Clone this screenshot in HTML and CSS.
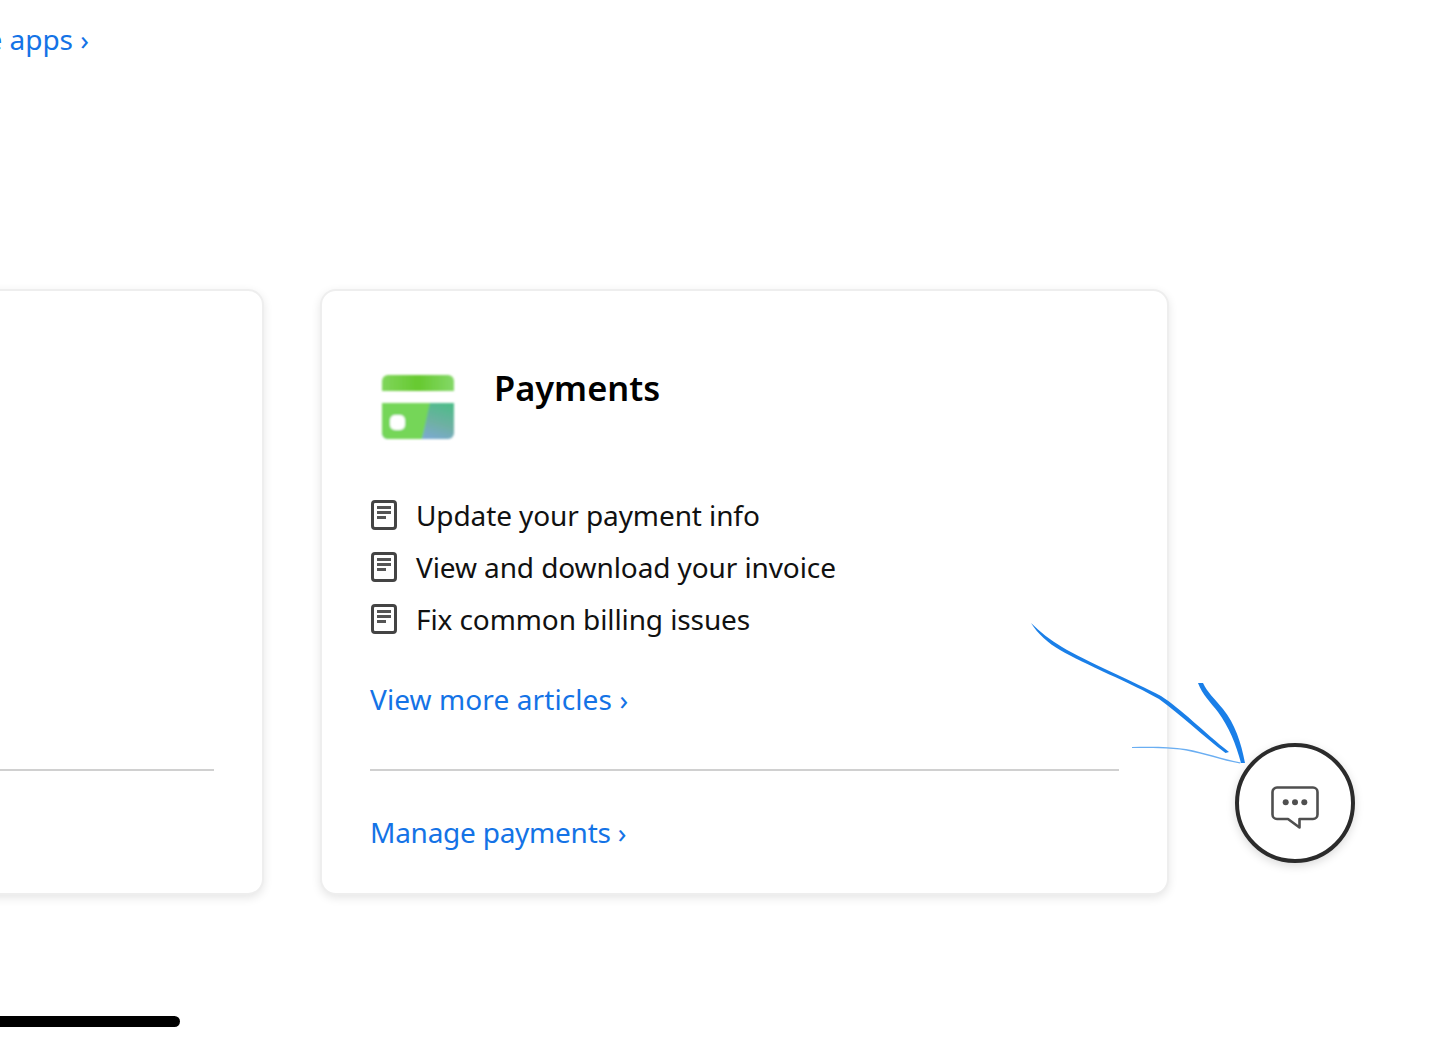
FILE: index.html
```html
<!DOCTYPE html>
<html lang="en">
<head>
    <meta charset="UTF-8">
    <meta name="viewport" content="width=device-width, initial-scale=1.0">
    <title>Account help</title>
    <link rel="stylesheet" href="styles.css">
</head>
<body>
    <div class="page">
        <div class="top-row">
            <a class="link" href="#">Manage apps <span class="chevron">›</span></a>
        </div>

        <div class="cards">
            <div class="card">
                <div class="card-body"></div>
                <hr class="divider">
                <div class="card-footer"></div>
            </div>

            <div class="card">
                <div class="card-body">
                    <div class="card-head">
                        <div class="card-icon">
                            <svg width="96" height="96" viewBox="0 0 96 96">
                                <defs>
                                    <linearGradient id="bandGrad" x1="0" y1="0" x2="1" y2="0">
                                        <stop offset="0" stop-color="#80d65c"/>
                                        <stop offset="0.5" stop-color="#66c92f"/>
                                        <stop offset="1" stop-color="#84d868"/>
                                    </linearGradient>
                                    <linearGradient id="cardGrad" x1="0.45" y1="1" x2="1" y2="0.1">
                                        <stop offset="0" stop-color="#7ea8dc"/>
                                        <stop offset="0.5" stop-color="#6fb0a4"/>
                                        <stop offset="1" stop-color="#4fbb8a"/>
                                    </linearGradient>
                                    <filter id="soft"><feGaussianBlur stdDeviation="0.8"/></filter>
                                    <clipPath id="cardClip"><path d="M12 44h72v30a6 6 0 0 1-6 6H18a6 6 0 0 1-6-6z"/></clipPath>
                                </defs>
                                <g filter="url(#soft)">
                                    <path d="M12 32h72v-10a6 6 0 0 0-6-6H18a6 6 0 0 0-6 6z" fill="url(#bandGrad)"/>
                                    <g clip-path="url(#cardClip)">
                                        <rect x="12" y="44" width="72" height="36" fill="url(#cardGrad)"/>
                                        <path d="M12 44h48c-3 12-5 24-8 36H12z" fill="#74d658"/>
                                    </g>
                                    <rect x="20" y="56" width="15" height="15" rx="5" fill="#fff"/>
                                </g>
                            </svg>
                        </div>
                        <h2 class="card-title">Payments</h2>
                    </div>

                    <ul class="articles">
                        <li>
                            <svg class="doc" width="28" height="32" viewBox="0 0 28 32"><rect x="2.500" y="2.500" width="23" height="27" rx="2.500" fill="none" stroke="#444" stroke-width="3"/><path d="M7 7h14v3H7zM7 12h14v3H7zM7 17h9v3H7z" fill="#555"/></svg>
                            <span>Update your payment info</span>
                        </li>
                        <li>
                            <svg class="doc" width="28" height="32" viewBox="0 0 28 32"><rect x="2.500" y="2.500" width="23" height="27" rx="2.500" fill="none" stroke="#444" stroke-width="3"/><path d="M7 7h14v3H7zM7 12h14v3H7zM7 17h9v3H7z" fill="#555"/></svg>
                            <span>View and download your invoice</span>
                        </li>
                        <li>
                            <svg class="doc" width="28" height="32" viewBox="0 0 28 32"><rect x="2.500" y="2.500" width="23" height="27" rx="2.500" fill="none" stroke="#444" stroke-width="3"/><path d="M7 7h14v3H7zM7 12h14v3H7zM7 17h9v3H7z" fill="#555"/></svg>
                            <span>Fix common billing issues</span>
                        </li>
                    </ul>

                    <a class="link more" href="#">View more articles <span class="chevron">›</span></a>
                </div>
                <hr class="divider">
                <div class="card-footer">
                    <a class="link tight" href="#">Manage payments <span class="chevron">›</span></a>
                </div>
            </div>
        </div>

        <div class="scrollbar"></div>
    </div>

    <!-- hand drawn arrows over the page -->
    <svg class="arrows" width="1435" height="1042" viewBox="0 0 1435 1042">
        <path d="M1031 623C1040 632 1050 640 1062 647C1085 661 1135 682 1161 696C1180 708 1205 733 1229 752L1225.500 753C1203 736 1180 714 1159 699C1133 684 1084 664 1060 650C1048 643 1038 634 1031 623Z" fill="#1a7fe8"/>
        <path d="M1198 683L1203 683C1207 692 1215 699 1223 709C1235 724 1241 742 1245 763L1241 763C1236 744 1229 727 1218 712C1211 703 1202 694 1198 683Z" fill="#1a7fe8"/>
        <path d="M1132 747C1150 746.400 1170 746.600 1186 749C1204 752 1222 759 1241 762.500L1240 763.600C1222 760 1204 754 1186 750.400C1170 748 1150 748 1132 748Z" fill="#6aaef2"/>
    </svg>

    <button class="chat-btn" aria-label="Chat">
        <svg width="50" height="44" viewBox="0 0 50 44">
            <path d="M7 2.500h36a4.500 4.500 0 0 1 4.500 4.500v22.500a4.500 4.500 0 0 1-4.500 4.500H29.500v8.500L18 34H7a4.500 4.500 0 0 1-4.500-4.500V7A4.500 4.500 0 0 1 7 2.500z" fill="none" stroke="#4f4f4f" stroke-width="2.600" stroke-linejoin="round"/>
            <circle cx="15.700" cy="17.200" r="3" fill="#4f4f4f"/>
            <circle cx="25" cy="17.200" r="3" fill="#4f4f4f"/>
            <circle cx="34.300" cy="17.200" r="3" fill="#4f4f4f"/>
        </svg>
    </button>
</body>
</html>
```

FILE: styles.css
```css
html, body {
    margin: 0;
    padding: 0;
    height: 100%;
    overflow: hidden;
    background: #fff;
}
body {
    position: relative;
    font-family: "Noto Sans", "Open Sans", sans-serif;
    color: #111;
}
.page {
    margin-left: -585px;
    width: 1754px;
}
.top-row {
    width: 674px;
    height: 289px;
    box-sizing: border-box;
    padding-top: 19px;
    text-align: right;
}
.link {
    color: #1473e6;
    font-size: 28px;
    line-height: 40px;
    text-decoration: none;
}
.tight {
    letter-spacing: -0.25px;
}
.cards {
    display: flex;
    gap: 56px;
}
.card {
    width: 849px;
    height: 606px;
    box-sizing: border-box;
    border: 2px solid #eee;
    border-radius: 16px;
    box-shadow: 0 3px 10px rgba(0, 0, 0, 0.1);
    padding: 0 48px;
    display: flex;
    flex-direction: column;
    background: #fff;
}
.card-body {
    height: 478px;
    padding-top: 68px;
    box-sizing: border-box;
}
.card-head {
    display: flex;
    gap: 28px;
}
.card-icon {
    width: 96px;
    height: 96px;
}
.card-title {
    margin: 6px 0 0;
    font-size: 34.4px;
    line-height: 46px;
    font-weight: 600;
    color: #000;
}
.articles {
    list-style: none;
    margin: 34px 0 0;
    padding: 0;
}
.articles li {
    display: flex;
    align-items: center;
    gap: 18px;
    height: 52px;
    font-size: 28px;
    letter-spacing: -0.1px;
}
.more {
    display: block;
    margin-top: 34px;
    letter-spacing: 0.1px;
}
.divider {
    margin: 0;
    border: 0;
    height: 2px;
    background: #d0d0d0;
}
.card-footer {
    padding-top: 41px;
}
.scrollbar {
    width: 765px;
    height: 11px;
    margin-top: 121px;
    border-radius: 6px;
    background: #000;
}
.arrows {
    position: absolute;
    left: 0;
    top: 0;
    pointer-events: none;
}
.chat-btn {
    position: absolute;
    left: 1235px;
    top: 743px;
    width: 120px;
    height: 120px;
    padding: 7px 0 0;
    border: 4px solid #2b2b2b;
    border-radius: 50%;
    background: #fff;
    box-shadow: 0 3px 10px rgba(0, 0, 0, 0.15);
    display: flex;
    align-items: center;
    justify-content: center;
}
```
